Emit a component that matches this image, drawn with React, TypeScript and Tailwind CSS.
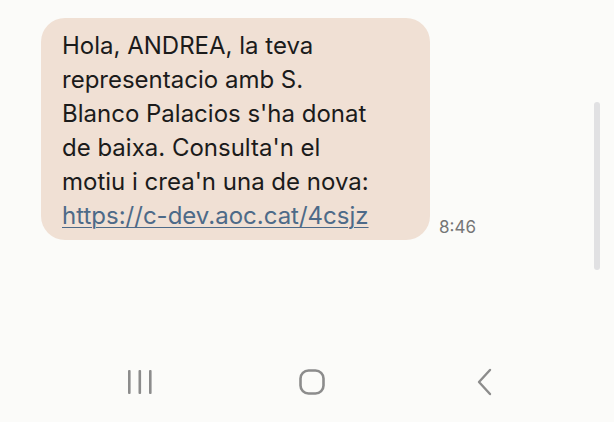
export default function App() {
  return (
    <div className="relative flex h-[422px] w-[614px] flex-col overflow-hidden bg-[#fbfbf9] font-['Inter',sans-serif]">
      {/* message list */}
      <div className="h-[350px] pl-[41px] pt-[18px]">
        <div className="flex items-end">
          <div className="w-[389px] rounded-[24px] bg-[#f0e0d4] pb-[7px] pl-[21px] pr-[8px] pt-[11px] text-[24px] leading-[34px] text-[#1b1b1b]">
            Hola, ANDREA, la teva
            <br />
            representacio amb S.
            <br />
            Blanco Palacios s'ha donat
            <br />
            de baixa. Consulta'n el
            <br />
            motiu i crea'n una de nova:
            <br />
            <a className="text-[#4d6a88] underline decoration-1 underline-offset-[3px]">https://c-dev.aoc.cat/4csjz</a>
          </div>
          <span className="mb-[3px] ml-[9px] text-[17px] leading-[20px] text-[#767676]">8:46</span>
        </div>
      </div>

      {/* scrollbar overlay */}
      <div className="absolute left-[594px] top-[102px] h-[168px] w-[6px] rounded-full bg-[#e1e1e3]" />

      {/* navigation bar */}
      <div className="flex h-[72px] items-start gap-[113px] pl-[109px] pt-[18px]">
        <div className="flex h-[28px] w-[60px] items-center justify-center">
          <svg width="28" height="26" viewBox="0 0 28 26">
            <rect x="3" y="1" width="2.6" height="24" rx="1" fill="#8c8c8c" />
            <rect x="13.5" y="1" width="2.6" height="24" rx="1" fill="#8c8c8c" />
            <rect x="24" y="1" width="2.6" height="24" rx="1" fill="#8c8c8c" />
          </svg>
        </div>
        <div className="flex h-[28px] w-[60px] items-center justify-center">
          <svg width="28" height="28" viewBox="0 0 28 28">
            <rect x="2.5" y="2.5" width="23" height="23" rx="8" fill="none" stroke="#8c8c8c" strokeWidth="2.6" />
          </svg>
        </div>
        <div className="flex h-[28px] w-[60px] items-center justify-center">
          <svg width="20" height="28" viewBox="0 0 20 28">
            <polyline points="15,2 4,14 15,26" fill="none" stroke="#8c8c8c" strokeWidth="2.4" strokeLinecap="round" strokeLinejoin="round" />
          </svg>
        </div>
      </div>
    </div>
  );
}
